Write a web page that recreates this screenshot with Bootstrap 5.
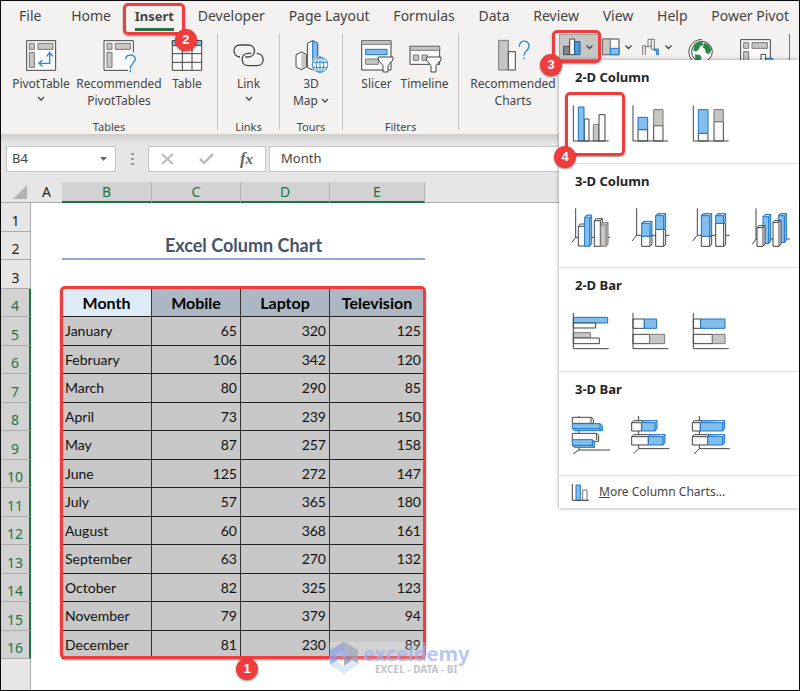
<!DOCTYPE html>
<html lang="en">
<head>
<meta charset="utf-8">
<meta name="viewport" content="width=device-width, initial-scale=1">
<title>Excel Column Chart</title>
<link href="https://cdn.jsdelivr.net/npm/bootstrap@5.3.0/dist/css/bootstrap.min.css" rel="stylesheet">
<style>
:root{--ui:"Noto Sans","Open Sans",sans-serif;--cell:Lato,"Open Sans",sans-serif;--alert:#f03c3c;--green:#217346}
body{font-family:var(--ui);font-size:13px;color:#444;background:#fff}
.app{min-height:100vh;border:1px solid #0a0a0a;overflow:hidden}
.app button{font-family:inherit;color:inherit;background:none;border:0;padding:0}
svg{display:block;overflow:visible;fill:none;flex:none}
.tabs{background:#f3f2f1;height:33px;padding:0 10px 0 18px}
.tabs a{color:#444;text-decoration:none;font-size:14px;line-height:30px;white-space:nowrap}
.tabs a:first-child{padding-right:6px}
.tabs a.current{font-weight:700;font-size:13px;height:30px;border-bottom:3px solid var(--green)}
.ribbon{background:#f3f2f1;height:101px;border-bottom:1px solid #d2d0ce}
.grp{padding:5px 0 0;height:96px;border-right:1px solid #c3c1bf}
.tool{line-height:17px;font-size:12px;white-space:nowrap}
.tool svg{margin:0 auto 3px}
.tool.charts{margin-top:5px}
.w-l{width:64px}.w-xl{width:92px}.w-m{width:48px}.w-s{width:44px}
.grp-name{font-size:11px;line-height:16px;margin-bottom:-5px}
.g-tables{width:217px;padding-left:8px;padding-right:8px}
.g-links{width:62px}.g-tours{width:63px}.g-filters{width:116px}
.mini{width:40px;height:26px;gap:5px}
.app .mini{padding-left:3px}
.app .mini.open{background:#c8c6c4;border:1px solid #a6a4a2}
.line{stroke:#444;stroke-width:3}
.b{fill:#83beec;stroke:#1b74c4;stroke-width:3}
.g{fill:#c8c6c4;stroke:#797775;stroke-width:3}
.w{fill:#fafafa;stroke:#444;stroke-width:3}
.blue{stroke:#2b88d8;stroke-width:4}
.ring{position:absolute;border:3px solid var(--alert);border-radius:5px;box-shadow:0 1px 2px #0006;pointer-events:none;z-index:6}
.dot{position:absolute;width:22px;height:22px;border-radius:50%;background:var(--alert);color:#fff;font:700 13px/22px "Liberation Sans",sans-serif;text-align:center;box-shadow:0 1px 2px #0007;z-index:7}
.ring-tab{inset:2px -11px -7px -12px}.dot-tab{right:-23px;top:28px}
.ring-mini{left:-7px;top:-4px;width:49px;height:33px}.dot-mini{left:-19px;top:20px}
.ring-opt{left:-3px;top:-12px;width:60px;height:64px}.dot-opt{left:-14px;top:42px}
.ring-range{left:59px;top:104px;width:366px;height:373px}.dot-range{left:235px;top:476px}
.app .gallery{position:absolute;display:block;right:0;top:26px;width:240px;padding:0;border:0;border-radius:0;background:#fff;box-shadow:0 0 4px #0006;z-index:5;margin:0;font-size:13px;color:#444}
.kind{height:104px;border-bottom:1px solid #e1dfdd;padding:8px 0 0 9px}
.kind h2{font-size:13px;font-weight:700;color:#252423;line-height:18px;margin:0 0 18px 7px}
.kind button{width:46px;height:42px;display:flex;justify-content:center}
.opts{gap:14px}
.more{height:32px;padding:0 13px;gap:10px;color:#444;text-decoration:none;font-size:12px}
.fbar{background:linear-gradient(#cfcfcf,#e6e6e6 8px);height:47px;padding:11px 0 0 5px}
.fbox{height:26px;background:#fff;border:1px solid #c6c6c6}
.fbox input{border:0;outline:0;background:none;color:#444;min-width:0;width:100%;padding:0 0 0 6px;font-size:13px}
.fbox.cellname{width:110px}.fbox.cellname input{padding-left:5px}
.fbox.acts{width:118px;padding:0 12px;margin-left:13px;margin-right:3px}
.fbox.content input{padding-left:11px}
.dots{width:19px}
.grid{table-layout:fixed;width:100%;border-collapse:separate;border-spacing:0;font-size:14px}
.grid th,.grid td{padding:0;overflow:hidden;white-space:nowrap}
.grid thead th{height:21px;line-height:18px;font-weight:400;text-align:center;background:#e6e6e6;border-bottom:1px solid #ababab;color:#222}
.grid thead th.on{background:#d2d2d2;color:var(--green);border-bottom:2px solid var(--green);border-right:1px solid #b4b4b4}
.grid tbody tr{height:28px}.grid tbody tr:nth-child(odd){height:29px}
.grid tbody tr:last-child{height:31px}
.grid tbody th{font-weight:400;text-align:center;vertical-align:bottom;line-height:20px;background:#e6e6e6;border-right:1px solid #ababab;border-bottom:1px solid #ababab;color:#222}
.grid tbody th.on{background:#d2d2d2;color:var(--green);border-right:2px solid var(--green)}
.grid tbody tr:last-child th{border-bottom:0}
.grid td{font-family:var(--cell);color:#111;line-height:20px}
.grid td.val{background:#c8c8c8;border-right:1px solid #333;border-bottom:1px solid #222;text-align:right;padding-right:3px}
.grid td.val.first{text-align:left;padding-left:3px}
.grid td.val.cap{font-size:16px;font-weight:700;color:#000;background:#adb7c3;text-align:center;padding:0}
.grid td.val.cap.first{background:#ddebf7}
.grid td.title{font-size:18px;font-weight:700;color:#44546a;text-align:center;border-bottom:2px solid #8ea9db}
.mark-logo{position:absolute;left:328px;top:460px;padding:0 1px;background:#ffffff40;opacity:.75;z-index:8}
.mark-name{font:700 20px/21px "Noto Sans",sans-serif;color:#a4b5f0}
.mark-tag{font:700 10px/10px "Noto Sans",sans-serif;color:#a8afbd}
</style>
<script src="https://cdn.jsdelivr.net/npm/bootstrap@5.3.0/dist/js/bootstrap.bundle.min.js"></script>
</head>
<body>
<div class="app d-flex flex-column">
  <nav class="tabs d-flex justify-content-between" aria-label="Ribbon tabs">
    <a href="#">File</a><a href="#">Home</a>
    <a href="#" class="current position-relative">Insert<span class="ring ring-tab"></span><span class="dot dot-tab">2</span></a>
    <a href="#">Developer</a><a href="#">Page Layout</a><a href="#">Formulas</a><a href="#">Data</a><a href="#">Review</a><a href="#">View</a><a href="#">Help</a><a href="#">Power Pivot</a>
  </nav>

  <section class="ribbon d-flex position-relative">
    <div class="grp g-tables d-flex flex-column justify-content-between">
      <div class="d-flex align-items-start">
        <button class="tool w-l"><svg width="32" height="33" viewBox="74 117 96 99"><path class="w" d="M79 122h87v89H79z"/><path class="g" d="M87 130h15v18H87zM113 130h45v18h-45zM87 157h15v45H87z"/><path class="blue" d="M148 160v30h-30M139 169l9-11 9 11M126 181l-10 9 10 9"/></svg>PivotTable<svg width="8" height="17" viewBox="0 0 8 17"><path d="M1 5l3 3 3-3" stroke="#444" stroke-width="1.3"/></svg></button>
        <button class="tool w-xl"><svg width="32" height="33" viewBox="309 117 96 99"><path class="w" d="M384 211h-72v-89h88v35"/><path class="g" d="M321 130h15v18h-15zM346 130h45v18h-45zM321 157h15v45h-15z"/><path d="M377 178c0-17 29-17 29-1 0 11-15 13-15 29M391 210v7" class="blue"/></svg>Recommended<br>PivotTables</button>
        <button class="tool w-s"><svg width="32" height="33" viewBox="513 117 96 99"><path class="w" d="M517 122h88v89h-88z"/><path d="M517 122h88v14h-88z" fill="#83beec" stroke="#444" stroke-width="3"/><path class="line" d="M547 136v75M576 136v75M517 161h88M517 187h88"/></svg>Table</button>
      </div>
      <div class="grp-name text-center">Tables</div>
    </div>
    <div class="grp g-links d-flex flex-column justify-content-between align-items-center">
      <button class="tool w-m"><svg width="32" height="33" viewBox="100 117 96 99" stroke="#444" stroke-width="4"><path d="M121 171c-24-2-24-36 0-36h24c26 0 26 36 0 36h-8"/><path d="M171 160c26 2 26 37 0 37h-24c-26 0-26-37 0-37h8"/></svg>Link<svg width="8" height="17" viewBox="0 0 8 17"><path d="M1 5l3 3 3-3" stroke="#444" stroke-width="1.3"/></svg></button>
      <div class="grp-name">Links</div>
    </div>
    <div class="grp g-tours d-flex flex-column justify-content-between align-items-center">
      <button class="tool w-m"><svg width="32" height="33" viewBox="287 117 96 99"><path class="w" d="M290 164l16-8 15 7v38l-15 8-16-8z"/><path d="M306 160l14 5v34l-14 8z" fill="#c8c6c4"/><path class="w" d="M324 130l16-8 15 8v72l-15 8-16-8z"/><path class="b" d="M340 122l15 8v60l-15 15z"/><circle cx="362" cy="194" r="26" fill="#f3f2f1"/><g stroke="#2b88d8" stroke-width="3"><circle cx="362" cy="194" r="23" fill="#fff"/><ellipse cx="362" cy="194" rx="11" ry="23"/><path d="M362 171v46M340 187h44M341 203h42"/></g></svg>3D<br>Map <svg class="d-inline m-0" width="8" height="9" viewBox="0 0 8 9"><path d="M1 2l3 3 3-3" stroke="#444" stroke-width="1.3"/></svg></button>
      <div class="grp-name">Tours</div>
    </div>
    <div class="grp g-filters d-flex flex-column justify-content-between align-items-center">
      <div class="d-flex align-items-start">
        <button class="tool w-m"><svg width="32" height="33" viewBox="475 117 96 99"><path class="w" d="M477 122h88v88h-88z"/><path class="g" d="M477 122h88v11h-88zM489 177h38v16h-38z"/><path class="b" d="M489 148h64v16h-64z"/><path class="w" d="M527 171h44v9l-15 17v19h-15v-19l-14-17z"/></svg>Slicer</button>
        <button class="tool w-m"><svg width="32" height="33" viewBox="622 117 96 99"><path class="w" d="M625 139h89v54h-89z"/><path class="g" d="M625 139h89v12h-89zM635 165h16v16h-16zM661 165h16v16h-16z"/><path class="w" d="M674 171h44v9l-15 17v19h-15v-19l-14-17z"/></svg>Timeline</button>
      </div>
      <div class="grp-name">Filters</div>
    </div>
    <div class="d-flex align-items-start flex-grow-1">
      <button class="tool charts w-xl ms-2"><svg width="32" height="33" viewBox="168 117 96 99"><path class="g" d="M173 121h29v89h-29z"/><path class="w" d="M202 155h21v55h-21z"/><path d="M235 141c0-23 29-23 29-3 0 14-15 14-15 29M249 172v6" class="blue"/></svg>Recommended<br>Charts</button>
      <div class="d-flex position-relative">
        <button class="mini open d-flex align-items-center" aria-label="Column or bar chart"><svg width="18" height="18" viewBox="366 114 54 54"><path d="M368 139h18v25h-18z" fill="#888" stroke="#444" stroke-width="3"/><path class="w" d="M386 117h15v47h-15z"/><path d="M401 125h16v39h-16z" fill="#4b9bdc" stroke="#1c5e9c" stroke-width="3"/></svg><svg width="7" height="5" viewBox="0 0 7 5"><path d="M.5.5l3 3 3-3" stroke="#444" stroke-width="1.3"/></svg></button>
        <button class="mini d-flex align-items-center" aria-label="Hierarchy chart"><svg width="18" height="18" viewBox="486 114 54 54"><path class="w" d="M488 117h49v47h-49z"/><path class="g" d="M488 117h23v47h-23z"/><path class="b" d="M511 145h26v19h-26z"/></svg><svg width="7" height="5" viewBox="0 0 7 5"><path d="M.5.5l3 3 3-3" stroke="#444" stroke-width="1.3"/></svg></button>
        <button class="mini d-flex align-items-center" aria-label="Waterfall chart"><svg width="18" height="18" viewBox="605 114 54 54"><path d="M607 165v-28h8v28M615 140h8v-22h10v22h-10M633 118h9v30h-9v-16" stroke="#777" stroke-width="3"/><path d="M642 147h12v17h-5v-12h-7z" class="b"/></svg><svg width="7" height="5" viewBox="0 0 7 5"><path d="M.5.5l3 3 3-3" stroke="#444" stroke-width="1.3"/></svg></button>
        <button class="ms-2" aria-label="Maps"><svg width="28" height="28" viewBox="741 105 84 84"><path d="M755 183c-17-24-8-58 30-62" stroke="#444" stroke-width="3"/><circle cx="786" cy="158" r="31" fill="#fff" stroke="#444" stroke-width="3"/><path d="M762 138l12-9 14 1 2 8-10 4-3 9-9 7-8-4zM765 166l15 2 5 9-7 10-12-6zM793 131l14 6 8 16-8 13-10-5-2-11-7-5z" fill="#2a8a4a"/></svg></button>
        <button class="ms-4" aria-label="PivotChart"><svg width="34" height="28" viewBox="894 105 102 84"><path class="w" d="M899 190v-68h89v68"/><path class="g" d="M908 131h15v17h-15zM933 131h46v17h-46zM908 158h15v32h-15z"/><path class="b" d="M975 178h20v12h-20z"/><path class="line" d="M960 190v-24h14v24"/></svg></button>
        <span class="ms-3 border-start border-secondary"></span>
        <span class="ring ring-mini"></span><span class="dot dot-mini">3</span>
      </div>
    </div>

    <div class="dropdown-menu show gallery">
      <section class="kind"><h2>2-D Column</h2>
        <div class="d-flex position-relative opts">
          <button aria-label="Clustered column"><svg width="40" height="40" viewBox="48 132 120 120"><path class="w" d="M88 177h14v66H88z"/><path class="b" d="M70 141h17v102H70z"/><path class="g" d="M115 193h17v50h-17z"/><path class="w" d="M132 164h18v79h-18z"/><path class="line" d="M55 136v107h106"/></svg></button>
          <button aria-label="Stacked column"><svg width="40" height="40" viewBox="230 132 120 120"><path class="w" d="M251 209h29v34h-29zM298 197h28v46h-28z"/><path class="b" d="M251 172h29v37h-29z"/><path class="g" d="M298 149h28v48h-28z"/><path class="line" d="M236 136v107h106"/></svg></button>
          <button aria-label="100% stacked column"><svg width="40" height="40" viewBox="411 132 120 120"><path class="w" d="M433 220h29v23h-29zM480 185h28v58h-28z"/><path class="b" d="M433 149h29v71h-29z"/><path class="g" d="M480 149h28v36h-28z"/><path class="line" d="M418 136v107h106"/></svg></button>
          <span class="ring ring-opt"></span><span class="dot dot-opt">4</span>
        </div>
      </section>
      <section class="kind"><h2>3-D Column</h2>
        <div class="d-flex opts">
          <button aria-label="3-D clustered column"><svg width="40" height="40" viewBox="48 129 120 120"><path class="line" d="M62 130v87h103M62 217l-11 15"/><path class="w" d="M70 184l6-7h18v66H70z"/><path class="line" d="M70 184h18"/><path class="b" d="M89 157l6-7h15v86l-6 8H89zM89 157h15l6-7M104 157v87"/><path class="w" d="M118 167l7-6h17v76l-6 7h-18zM118 167h18l6-6M136 167v77"/><path class="g" d="M137 180l6-7h16v64l-6 7h-16zM137 180h16l6-7M153 180v64"/></svg></button>
          <button aria-label="3-D stacked column"><svg width="40" height="40" viewBox="230 129 120 120"><path class="line" d="M247 130v81h98M247 211l-14 17"/><path class="w" d="M262 213h31v24l-6 7h-25zM287 213v31M304 193h30v44l-6 7h-24zM328 193v51"/><path class="b" d="M262 175l6-6h25v40l-6 5h-25zM262 175h25l6-6M287 175v39M304 152l6-6h24v42l-6 5h-24zM304 152h24l6-6M328 152v41"/></svg></button>
          <button aria-label="3-D 100% stacked column"><svg width="40" height="40" viewBox="411 129 120 120"><path class="line" d="M430 130v81h97M430 211l-14 17"/><path class="w" d="M442 213h31v24l-6 7h-25zM467 213v31M485 175h30v62l-6 7h-24zM509 175v69"/><path class="b" d="M442 152l6-6h25v63l-6 5h-25zM442 152h25l6-6M467 152v62M485 152l6-6h24v24l-6 5h-24zM485 152h24l6-6M509 152v23"/></svg></button>
          <button aria-label="3-D column"><svg width="40" height="40" viewBox="592 129 120 120"><path class="line" d="M607 130v92h102M607 222l-11 16"/><path class="b" d="M628 155l6-7h17v80l-6 8h-17zM628 155h17l6-7M645 155v81M674 152l6-6h18v80l-6 7h-18zM674 152h18l6-6M692 152v81"/><path class="w" d="M658 172l6-6h18v71l-6 7h-18zM658 172h18l6-6M676 172v72"/><path class="w" d="M610 188l6-6h18v55l-6 7h-18zM610 188h18l6-6M628 188v56"/></svg></button>
        </div>
      </section>
      <section class="kind"><h2>2-D Bar</h2>
        <div class="d-flex opts">
          <button aria-label="Clustered bar"><svg width="40" height="40" viewBox="48 126 120 120"><path class="b" d="M55 142h103v17H55z"/><path class="w" d="M55 159h67v15H55z"/><path class="g" d="M55 188h51v16H55z"/><path class="w" d="M55 204h78v17H55z"/><path class="line" d="M55 129v107h106"/></svg></button>
          <button aria-label="Stacked bar"><svg width="40" height="40" viewBox="230 126 120 120"><path class="w" d="M236 147h34v28h-34zM236 193h50v28h-50z"/><path class="b" d="M270 147h37v28h-37z"/><path class="g" d="M286 193h45v28h-45z"/><path class="line" d="M236 129v107h106"/></svg></button>
          <button aria-label="100% stacked bar"><svg width="40" height="40" viewBox="411 126 120 120"><path class="w" d="M418 147h22v28h-22zM418 193h57v28h-57z"/><path class="b" d="M440 147h73v28h-73z"/><path class="g" d="M475 193h38v28h-38z"/><path class="line" d="M418 129v107h106"/></svg></button>
        </div>
      </section>
      <section class="kind"><h2>3-D Bar</h2>
        <div class="d-flex opts">
          <button aria-label="3-D clustered bar"><svg width="40" height="40" viewBox="48 138 120 120"><path class="line" d="M72 138v102h93M72 240l-17 11"/><path class="w" d="M52 142h58l5 6v12H52zM108 142v18"/><path class="b" d="M52 161h83l7 6v15H58l-6-6zM52 176h84l6 6M135 161v16"/><path class="w" d="M52 190h73l6 6v18H52zM125 190v20"/><path class="b" d="M52 209h60l6 6v17H58l-6-6zM52 226h60l6 6M112 209v17"/></svg></button>
          <button aria-label="3-D stacked bar"><svg width="40" height="40" viewBox="230 138 120 120"><path class="line" d="M253 138v98h92M253 236l-15 15"/><path class="w" d="M232 158l6-6h30l-6 6v25h-30zM232 158h30M232 200l6-6h50l-6 6v25h-50zM232 200h50"/><path class="b" d="M262 158l6-6h40v24l-6 7h-40zM262 158h40l6-6M302 158v25M282 200l6-6h44v24l-6 7h-44zM282 200h44l6-6M326 200v25"/></svg></button>
          <button aria-label="3-D 100% stacked bar"><svg width="40" height="40" viewBox="411 138 120 120"><path class="line" d="M436 138v98h91M436 236l-15 15"/><path class="w" d="M415 158l6-6h24l-6 6v25h-24zM415 158h24M415 200l6-6h46l-6 6v25h-46zM415 200h46"/><path class="b" d="M439 158l6-6h67v24l-6 7h-67zM439 158h67l6-6M506 158v25M461 200l6-6h45v24l-6 7h-45zM461 200h45l6-6M506 200v25"/></svg></button>
        </div>
      </section>
      <a href="#" class="more d-flex align-items-center"><svg width="17" height="18" viewBox="52 333 51 54"><path class="b" d="M64 339h13v46H64z"/><path fill="#fff" stroke="#797775" stroke-width="3" d="M84 354h13v31H84z"/><path class="line" d="M53 336v49h50"/></svg><span><u>M</u>ore Column Charts...</span></a>
    </div>
  </section>

  <section class="fbar d-flex">
    <div class="fbox cellname d-flex align-items-center"><input aria-label="Name box" value="B4"><svg width="7" height="4" class="me-2" viewBox="0 0 7 4"><path d="M0 0h7L3.500 4z" fill="#666"/></svg></div>
    <div class="dots"><svg class="ms-auto" width="4" height="26" viewBox="0 0 4 26"><path d="M0 7h3v2H0zM0 12h3v2H0zM0 17h3v2H0z" fill="#999"/></svg></div>
    <div class="fbox acts d-flex align-items-center justify-content-between">
      <button aria-label="Cancel"><svg width="13" height="12" viewBox="0 0 13 12"><path d="M1 1l11 10M12 1L1 11" stroke="#bbb" stroke-width="2"/></svg></button>
      <button aria-label="Enter"><svg width="15" height="12" viewBox="0 0 15 12"><path d="M1 6l4 4 9-9" stroke="#bbb" stroke-width="2.500"/></svg></button>
      <button aria-label="Insert function" style="font:italic 700 17px/22px 'Liberation Serif',serif;color:#666">f<small>x</small></button>
    </div>
    <div class="fbox content flex-grow-1 d-flex"><input aria-label="Formula bar" value="Month"></div>
  </section>

  <main class="position-relative flex-grow-1">
    <table class="grid">
      <colgroup><col style="width:30px"><col style="width:31px"><col style="width:90px"><col style="width:89px"><col style="width:89px"><col style="width:95px"><col></colgroup>
      <thead><tr><th aria-label="Select all"><svg class="ms-auto me-1" width="14" height="14" viewBox="0 0 14 14"><path d="M14 0v14H0z" fill="#b4b4b4"/></svg></th><th>A</th><th class="on">B</th><th class="on">C</th><th class="on">D</th><th class="on">E</th><th></th></tr></thead>
      <tbody>
        <tr><th>1</th><td colspan="6"></td></tr>
        <tr><th>2</th><td></td><td class="title" colspan="4">Excel Column Chart</td><td></td></tr>
        <tr><th>3</th><td colspan="6"></td></tr>
        <tr><th class="on">4</th><td></td><td class="val cap first">Month</td><td class="val cap">Mobile</td><td class="val cap">Laptop</td><td class="val cap">Television</td><td></td></tr>
        <tr><th class="on">5</th><td></td><td class="val first">January</td><td class="val">65</td><td class="val">320</td><td class="val">125</td><td></td></tr>
        <tr><th class="on">6</th><td></td><td class="val first">February</td><td class="val">106</td><td class="val">342</td><td class="val">120</td><td></td></tr>
        <tr><th class="on">7</th><td></td><td class="val first">March</td><td class="val">80</td><td class="val">290</td><td class="val">85</td><td></td></tr>
        <tr><th class="on">8</th><td></td><td class="val first">April</td><td class="val">73</td><td class="val">239</td><td class="val">150</td><td></td></tr>
        <tr><th class="on">9</th><td></td><td class="val first">May</td><td class="val">87</td><td class="val">257</td><td class="val">158</td><td></td></tr>
        <tr><th class="on">10</th><td></td><td class="val first">June</td><td class="val">125</td><td class="val">272</td><td class="val">147</td><td></td></tr>
        <tr><th class="on">11</th><td></td><td class="val first">July</td><td class="val">57</td><td class="val">365</td><td class="val">180</td><td></td></tr>
        <tr><th class="on">12</th><td></td><td class="val first">August</td><td class="val">60</td><td class="val">368</td><td class="val">161</td><td></td></tr>
        <tr><th class="on">13</th><td></td><td class="val first">September</td><td class="val">63</td><td class="val">270</td><td class="val">132</td><td></td></tr>
        <tr><th class="on">14</th><td></td><td class="val first">October</td><td class="val">82</td><td class="val">325</td><td class="val">123</td><td></td></tr>
        <tr><th class="on">15</th><td></td><td class="val first">November</td><td class="val">79</td><td class="val">379</td><td class="val">94</td><td></td></tr>
        <tr><th class="on">16</th><td></td><td class="val first">December</td><td class="val">81</td><td class="val">230</td><td class="val">89</td><td></td></tr>
        <tr><th></th><td colspan="6"></td></tr>
      </tbody>
    </table>
    <span class="ring ring-range"></span><span class="dot dot-range">1</span>
    <div class="mark-logo d-flex align-items-center gap-1">
      <svg width="29" height="32" viewBox="0 0 29 32"><path d="M14 0L0 8v15l7-4v-7l7-4z" fill="#8fa3e6"/><path d="M14 0l14 8v14l-7-4v-6l-7-4z" fill="#a3a9b8"/><path d="M7 12l7-4 7 4-7 5z" fill="#9fb0e8"/><path d="M14 17l7-5v8l-7 4z" fill="#8d95a8"/><path d="M0 23l7-4 7 5 7-5 7 4-14 9z" fill="#cfe3f5"/></svg>
      <div class="text-center"><div class="mark-name">exceldemy</div><div class="mark-tag">EXCEL - DATA - BI</div></div>
    </div>
  </main>
</div>
</body>
</html>
